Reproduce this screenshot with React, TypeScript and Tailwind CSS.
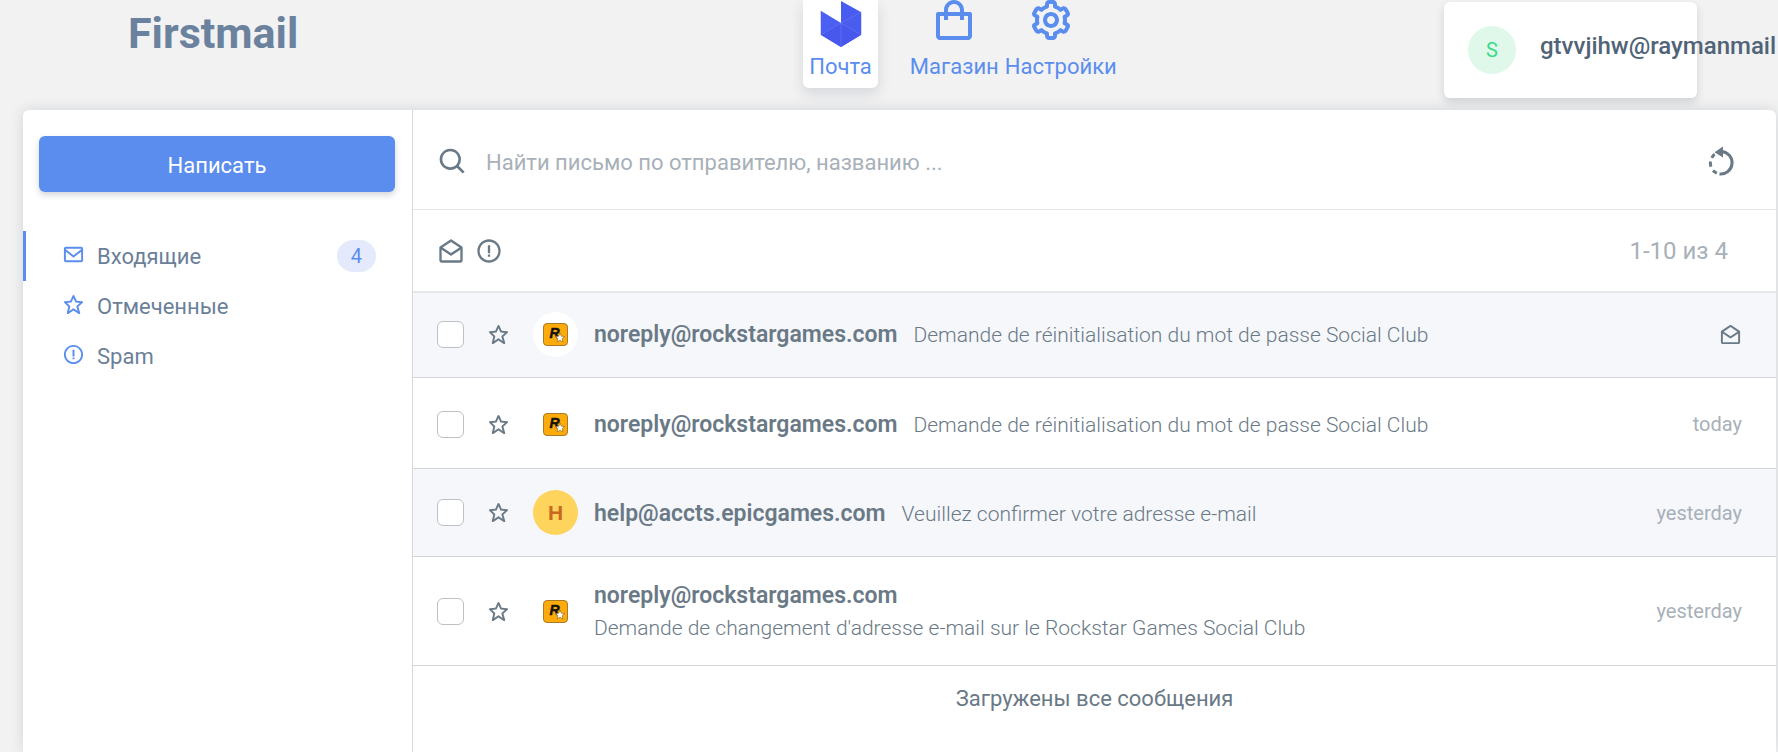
import React from 'react';
import { BiCog, BiEnvelope, BiEnvelopeOpen, BiErrorCircle, BiSearch, BiShoppingBag, BiStar } from 'react-icons/bi';

interface Mail {
  id: string;
  sender: string;
  subject: string;
  time?: string;
  avatar: 'rockstar' | 'letter';
  unread: boolean;
  stacked?: boolean;
  spacing: string;
}

const mails: Mail[] = [
  { id: '1', sender: 'noreply@rockstargames.com', subject: 'Demande de réinitialisation du mot de passe Social Club', avatar: 'rockstar', unread: true, spacing: 'min-h-[85px] pb-0.5' },
  { id: '2', sender: 'noreply@rockstargames.com', subject: 'Demande de réinitialisation du mot de passe Social Club', time: 'today', avatar: 'rockstar', unread: false, spacing: 'min-h-[91px] pt-0.5' },
  { id: '3', sender: 'help@accts.epicgames.com', subject: 'Veuillez confirmer votre adresse e-mail', time: 'yesterday', avatar: 'letter', unread: true, spacing: 'min-h-[88px]' },
  { id: '4', sender: 'noreply@rockstargames.com', subject: "Demande de changement d'adresse e-mail sur le Rockstar Games Social Club", time: 'yesterday', avatar: 'rockstar', unread: false, stacked: true, spacing: 'min-h-[109px]' },
];

const folders = [
  { id: 'inbox', label: 'Входящие', icon: BiEnvelope, count: 4 },
  { id: 'starred', label: 'Отмеченные', icon: BiStar },
  { id: 'spam', label: 'Spam', icon: BiErrorCircle },
];

const MailLogo: React.FC = () => (
  <svg viewBox="0 0 44 51" className="w-11 h-[51px] mb-1" aria-hidden="true">
    <path d="M0.5 11.5 22 24.5V50L0.5 37Z" fill="#4b5ff2" />
    <path d="M22 1 43.5 13V37L22 50Z" fill="#485cf0" />
    <path d="M22 24.5 0.5 37 22 50 43.5 37Z" fill="#4858ec" />
    <path d="M22 24.5 43.5 13M22 24.5 43.5 37M22 24.5 0.5 37M22 24.5V50" stroke="#7383f8" strokeWidth="0.5" fill="none" />
  </svg>
);

const RockstarLogo: React.FC = () => (
  <svg viewBox="0 0 25 23" className="w-[25px] h-[23px]" aria-hidden="true">
    <rect x="0.5" y="0.5" width="24" height="22" rx="3.5" fill="#fdab0b" stroke="#a87a2a" />
    <text x="6.5" y="14.5" fontFamily="Liberation Sans, sans-serif" fontSize="14" fontWeight="bold" fontStyle="italic" fill="#15120a" stroke="#15120a" strokeWidth="0.5">R</text>
    <path d="M17 10 18.3 13.2 21.6 13.5 19.1 15.7 19.9 19 17 17.2 14.1 19 14.9 15.7 12.4 13.5 15.7 13.2Z" fill="#fff" stroke="#6b4a10" strokeWidth="0.5" />
  </svg>
);

// counter-clockwise arrow with a dashed left side
const RefreshIcon: React.FC = () => (
  <svg viewBox="0 0 32 32" className="w-8 h-8" fill="none" stroke="currentColor" strokeWidth="3" aria-hidden="true">
    <path d="M17 5.5A11.3 11.3 0 0 1 14.5 28" />
    <path d="M11.8 27.1A11.3 11.3 0 0 1 8 24.4M5.9 20.8A11.3 11.3 0 0 1 5.5 15.5M6.8 11.9A11.3 11.3 0 0 1 9.6 8.2" />
    <path d="M18 0.5V11.5L9.5 6.2Z" fill="currentColor" stroke="none" />
  </svg>
);

const Header: React.FC = () => (
  <header className="h-[110px] flex items-start justify-between pl-32 pr-[81px]">
    <h1 className="w-[348px] pt-2 text-[43px] leading-[50px] font-bold text-[#6b829e]">Firstmail</h1>
    <nav className="flex items-start text-[22px] leading-[30px] text-[#5a8dee]">
      <a href="#mail" className="h-[88px] mr-8 px-1.5 pb-1.5 flex flex-col items-center justify-end bg-white rounded-b-md shadow-[0_6px_14px_rgba(25,42,70,0.13)]">
        <MailLogo />
        <span>Почта</span>
      </a>
      <a href="#shop" className="mr-1.5 flex flex-col items-center">
        <BiShoppingBag className="w-12 h-12 -mt-1 mb-2" />
        <span>Магазин</span>
      </a>
      <a href="#settings" className="flex flex-col items-center">
        <BiCog className="w-12 h-12 -mt-1 mb-2 mr-5" />
        <span>Настройки</span>
      </a>
    </nav>
    <div className="mt-[2px] w-[253px] h-24 px-6 flex items-center gap-6 bg-white rounded-md shadow-[0_4px_8px_rgba(25,42,70,0.16)]">
      <span className="shrink-0 w-12 h-12 rounded-full flex items-center justify-center bg-[#dff8ea] text-[#39da8a] text-xl">S</span>
      <span className="pb-2 text-2xl font-medium text-[#516377]">gtvvjihw@raymanmail</span>
    </div>
  </header>
);

const Sidebar: React.FC = () => (
  <aside className="w-[390px] shrink-0 border-r border-[#d5d8db]">
    <div className="pl-4 pr-[17px] pt-[26px] pb-[39px]">
      <button type="button" className="w-full h-14 pt-0.5 rounded-md bg-[#5a8dee] text-white text-[22px] shadow-[0_3px_6px_rgba(25,42,70,0.2)]">Написать</button>
    </div>
    <nav>
      {folders.map(({ id, label, icon: Icon, count }) => (
        <a key={id} href={`#${id}`} className={`h-[50px] pl-9 pr-9 flex items-center border-l-3 text-[22px] text-[#6b7f99] ${count ? 'border-[#5a8dee]' : 'border-transparent'}`}>
          <Icon className="w-[23px] h-[23px] mb-1 mr-3 text-[#5a8dee]" />
          <span>{label}</span>
          {count && <span className="ml-auto px-3.5 rounded-full bg-[#e4eafb] text-[#5a8dee] text-xl leading-8">{count}</span>}
        </a>
      ))}
    </nav>
  </aside>
);

const MailRow: React.FC<{ mail: Mail }> = ({ mail }) => (
  <li className={`${mail.spacing} pl-6 pr-[34px] flex items-center border-b border-[#d3d6d9] ${mail.unread ? 'bg-[#f5f7fb]' : 'bg-white'}`}>
    <input type="checkbox" aria-label={mail.subject} className="appearance-none w-[27px] h-[27px] rounded-md border border-[#bcc1c6] bg-white" />
    <button type="button" aria-label="star" className="ml-[23px] text-[#6a7986]"><BiStar className="w-[23px] h-[23px]" /></button>
    {mail.avatar === 'rockstar' ? (
      <span className="ml-[23px] mr-4 shrink-0 w-[45px] h-[45px] rounded-full flex items-center justify-center bg-white">
        <RockstarLogo />
      </span>
    ) : (
      <span className="ml-[23px] mr-4 shrink-0 w-[45px] h-[45px] rounded-full flex items-center justify-center bg-[#ffd45c] text-[#c8691f] text-[21px] font-bold font-['Liberation_Sans',sans-serif]">H</span>
    )}
    <div className={mail.stacked ? 'pt-0.5 flex flex-col' : 'pt-0.5 flex items-baseline gap-4'}>
      <span className="text-[23px] leading-[33px] font-semibold text-[#6a7986]">{mail.sender}</span>
      <span className="text-[21px] leading-[33px] font-light text-[#6a7986]">{mail.subject}</span>
    </div>
    <span className="ml-auto text-xl text-[#a8b0b8]">{mail.time ?? <BiEnvelopeOpen className="w-[23px] h-[23px] text-[#6a7986]" />}</span>
  </li>
);

const App: React.FC = () => (
  <div className="min-h-screen flex flex-col overflow-hidden bg-[#f2f2f2] font-['Roboto',sans-serif]">
    <Header />
    <div className="flex-1 ml-[23px] mr-[2px] flex bg-white rounded-t-md shadow-[0_0_14px_rgba(25,42,70,0.14)]">
      <Sidebar />
      <main className="flex-1">
        <div className="h-[100px] pt-1 pl-6 pr-[39px] flex items-center border-b border-[#e4e6e8]">
          <BiSearch className="w-8 h-8 mr-[17px] text-[#6a7986]" />
          <input type="text" aria-label="search" placeholder="Найти письмо по отправителю, названию ..." className="flex-1 pt-0.5 text-[22px] placeholder:text-[#a8b0b8] outline-none" />
          <button type="button" aria-label="refresh" className="text-[#6a7986]"><RefreshIcon /></button>
        </div>
        <div className="h-[83px] px-6 flex items-center gap-2.5 border-b-2 border-[#e4e8eb] text-[#6a7986]">
          <BiEnvelopeOpen className="w-7 h-7" />
          <BiErrorCircle className="w-7 h-7" />
          <span className="ml-auto mr-6 text-2xl text-[#a8b0b8]">1-10 из 4</span>
        </div>
        <ul>{mails.map((mail) => <MailRow key={mail.id} mail={mail} />)}</ul>
        <p className="py-4 text-center text-[22px] leading-[34px] text-[#6a7986]">Загружены все сообщения</p>
      </main>
    </div>
  </div>
);

export default App;
